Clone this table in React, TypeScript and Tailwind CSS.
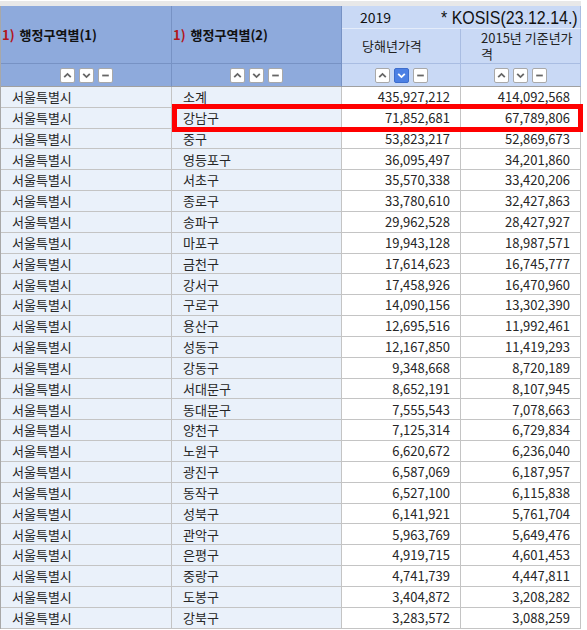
import React from 'react'

type Row = [string, string, string]

const ROWS: Row[] = [
  ['소계', '435,927,212', '414,092,568'],
  ['강남구', '71,852,681', '67,789,806'],
  ['중구', '53,823,217', '52,869,673'],
  ['영등포구', '36,095,497', '34,201,860'],
  ['서초구', '35,570,338', '33,420,206'],
  ['종로구', '33,780,610', '32,427,863'],
  ['송파구', '29,962,528', '28,427,927'],
  ['마포구', '19,943,128', '18,987,571'],
  ['금천구', '17,614,623', '16,745,777'],
  ['강서구', '17,458,926', '16,470,960'],
  ['구로구', '14,090,156', '13,302,390'],
  ['용산구', '12,695,516', '11,992,461'],
  ['성동구', '12,167,850', '11,419,293'],
  ['강동구', '9,348,668', '8,720,189'],
  ['서대문구', '8,652,191', '8,107,945'],
  ['동대문구', '7,555,543', '7,078,663'],
  ['양천구', '7,125,314', '6,729,834'],
  ['노원구', '6,620,672', '6,236,040'],
  ['광진구', '6,587,069', '6,187,957'],
  ['동작구', '6,527,100', '6,115,838'],
  ['성북구', '6,141,921', '5,761,704'],
  ['관악구', '5,963,769', '5,649,476'],
  ['은평구', '4,919,715', '4,601,453'],
  ['중랑구', '4,741,739', '4,447,811'],
  ['도봉구', '3,404,872', '3,208,282'],
  ['강북구', '3,283,572', '3,088,259'],
]

function SortButton({ kind, active = false }: { kind: 'up' | 'down' | 'none'; active?: boolean }) {
  const stroke = active ? '#ffffff' : '#666666'
  return (
    <div
      className={`w-[15px] h-[15px] rounded-[2px] border flex items-center justify-center ${
        active ? 'bg-[#4c80e4] border-[#3d6dcc]' : 'bg-white border-[#a9a9a9]'
      }`}
    >
      <svg width="9" height="9" viewBox="0 0 9 9">
        {kind === 'up' && <path d="M1.2 6.2 L4.5 2.9 L7.8 6.2" fill="none" stroke={stroke} strokeWidth="1.8" />}
        {kind === 'down' && <path d="M1.2 2.8 L4.5 6.1 L7.8 2.8" fill="none" stroke={stroke} strokeWidth="1.8" />}
        {kind === 'none' && <path d="M1.2 4.5 H7.8" fill="none" stroke={stroke} strokeWidth="1.8" />}
      </svg>
    </div>
  )
}

function ButtonGroup({ activeDown = false }: { activeDown?: boolean }) {
  return (
    <div className="flex gap-[4px]">
      <SortButton kind="up" />
      <SortButton kind="down" active={activeDown} />
      <SortButton kind="none" />
    </div>
  )
}

export default function App() {
  return (
    <div className="relative w-[587px] h-[630px] overflow-hidden bg-white font-['Noto_Sans_CJK_KR',sans-serif] text-[13px] text-[#262626]">
      <div className="mt-px h-[5px] w-[581px] bg-[#e8e8e8]" />

      <div className="w-[581px] border-l border-[#a8a8a8]">
        {/* header */}
        <div className="grid grid-cols-[171px_170px_119px_120px] grid-rows-[23px_35px_23px]">
          <div className="row-span-2 bg-[#8eaadc] border-r border-b border-[#7792c4] flex items-center pl-px font-bold text-[#111]">
            <span className="text-[#b3161c] mr-[5px]">1)</span>행정구역별(1)
          </div>
          <div className="row-span-2 bg-[#8eaadc] border-r border-b border-[#7792c4] flex items-center pl-px font-bold text-[#111]">
            <span className="text-[#b3161c] mr-[5px]">1)</span>행정구역별(2)
          </div>
          <div className="col-span-2 bg-[#c9d9f5] border-b border-r border-b-[#e4ecfa] border-r-[#a9bde2] flex items-center justify-between pl-[18px] pr-[2px] text-[#111]">
            <span className="text-[14px]">2019</span>
            <span className="inline-block origin-right scale-x-[0.84] font-['Liberation_Sans',sans-serif] text-[19px] leading-none">
              * KOSIS(23.12.14.)
            </span>
          </div>
          <div className="bg-[#c9d9f5] border-r border-b border-[#a9bde2] flex items-center pl-[20px] text-[#222]">
            당해년가격
          </div>
          <div className="bg-[#c9d9f5] border-r border-b border-[#a9bde2] flex flex-col justify-center pl-[20px] text-[#222]">
            <span className="leading-[16px]">2015년 기준년가</span>
            <span className="leading-[16px]">격</span>
          </div>

          <div className="bg-[#8eaadc] border-r border-b border-r-[#7792c4] border-b-[#a0a0a0] flex items-center justify-center">
            <ButtonGroup />
          </div>
          <div className="bg-[#8eaadc] border-r border-b border-r-[#7792c4] border-b-[#a0a0a0] flex items-center justify-center">
            <ButtonGroup />
          </div>
          <div className="bg-[#c9d9f5] border-r border-b border-r-[#a9bde2] border-b-[#a0a0a0] flex items-center justify-center">
            <ButtonGroup activeDown />
          </div>
          <div className="bg-[#c9d9f5] border-r border-b border-r-[#a9bde2] border-b-[#a0a0a0] flex items-center justify-center">
            <ButtonGroup />
          </div>
        </div>

        {/* data rows */}
        {ROWS.map(([district, current, base], index) => (
          <div key={index} className="grid grid-cols-[171px_170px_119px_120px] h-[20.84px]">
            <div className="bg-[#eaf1fa] border-r border-b border-[#c4c4c4] flex items-center pl-[11px]">서울특별시</div>
            <div className="bg-[#eaf1fa] border-r border-b border-[#c4c4c4] flex items-center pl-[11px]">{district}</div>
            <div className="bg-white border-r border-b border-[#c4c4c4] flex items-center justify-end pr-[10px]">{current}</div>
            <div className="bg-white border-r border-b border-[#c4c4c4] flex items-center justify-end pr-[10px]">{base}</div>
          </div>
        ))}
      </div>

      {/* highlight box */}
      <div className="absolute left-[172px] top-[104px] w-[411px] h-[28px] border-[5px] border-[#ff0000]" />
    </div>
  )
}
